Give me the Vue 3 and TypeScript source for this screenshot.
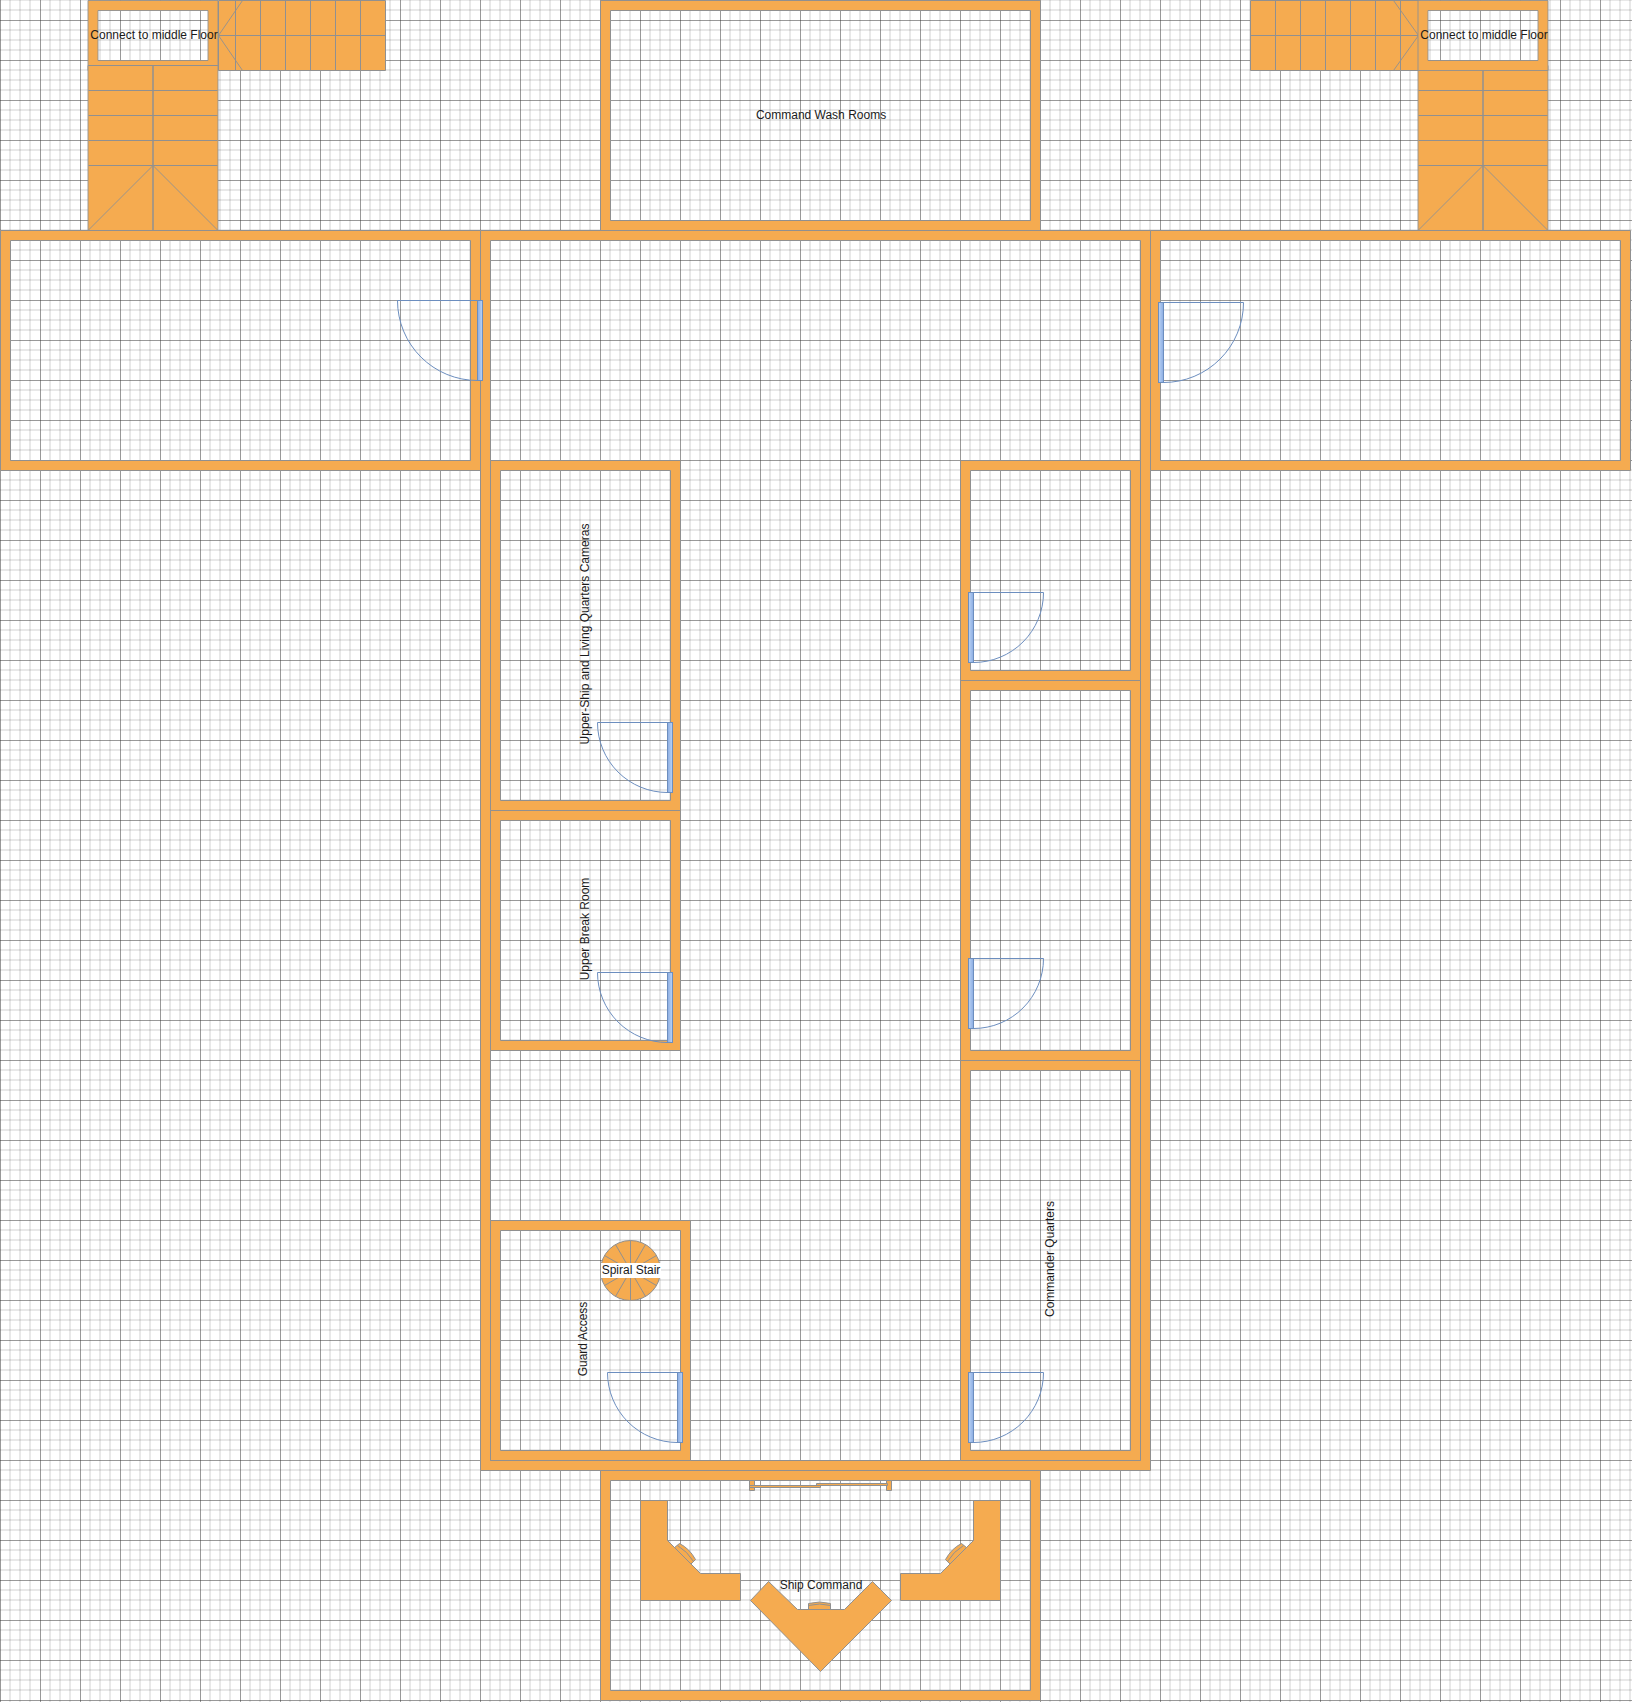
<script setup lang="ts">
interface Room { x: number; y: number; w: number; h: number }
interface Door { x: number; y: number; size: number; side: 'left' | 'right' }
interface Label { text: string; x: number; y: number; vertical?: boolean }

const WALL = 10

const rooms: Room[] = [
  { x: 600, y: 0, w: 440, h: 230 },
  { x: 0, y: 230, w: 480, h: 240 },
  { x: 1150, y: 230, w: 480, h: 240 },
  { x: 480, y: 230, w: 670, h: 1240 },
  { x: 490, y: 460, w: 190, h: 350 },
  { x: 490, y: 810, w: 190, h: 240 },
  { x: 490, y: 1220, w: 200, h: 240 },
  { x: 960, y: 460, w: 180, h: 220 },
  { x: 960, y: 680, w: 180, h: 380 },
  { x: 960, y: 1060, w: 180, h: 400 },
  { x: 600, y: 1470, w: 440, h: 230 },
]
const leftLanding: Room = { x: 88, y: 0, w: 130, h: 70 }
const rightLanding: Room = { x: 1418, y: 0, w: 130, h: 70 }

// x is the hinge line that the leaf swings from
const doors: Door[] = [
  { x: 477, y: 300, size: 80, side: 'left' },
  { x: 1163, y: 302, size: 80, side: 'right' },
  { x: 667, y: 722, size: 70, side: 'left' },
  { x: 667, y: 972, size: 70, side: 'left' },
  { x: 677, y: 1372, size: 70, side: 'left' },
  { x: 973, y: 592, size: 70, side: 'right' },
  { x: 973, y: 958, size: 70, side: 'right' },
  { x: 973, y: 1372, size: 70, side: 'right' },
]
const LEAF = 5

const labels: Label[] = [
  { text: 'Connect to middle Floor', x: 154, y: 39 },
  { text: 'Connect to middle Floor', x: 1484, y: 39 },
  { text: 'Command Wash Rooms', x: 821, y: 119 },
  { text: 'Upper-Ship and Living Quarters Cameras', x: 589, y: 634, vertical: true },
  { text: 'Upper Break Room', x: 589, y: 929, vertical: true },
  { text: 'Guard Access', x: 587, y: 1339, vertical: true },
  { text: 'Commander Quarters', x: 1054, y: 1259, vertical: true },
  { text: 'Ship Command', x: 821, y: 1589 },
]

const frame = ({ x, y, w, h }: Room): string =>
  `M${x} ${y}h${w}v${h}h${-w}z` +
  `M${x + WALL} ${y + WALL}h${w - 2 * WALL}v${h - 2 * WALL}h${2 * WALL - w}z`

const swing = (d: Door): string => {
  const dir = d.side === 'left' ? -1 : 1
  const tip = d.x + dir * d.size
  return `M${d.x} ${d.y}H${tip}A${d.size} ${d.size} 0 0 ${dir === 1 ? 1 : 0} ${d.x} ${d.y + d.size}`
}

const spokes: string = Array.from({ length: 12 }, (_, i) => {
  const a = (i * Math.PI) / 6
  return `M630 1270L${(630 + 30 * Math.sin(a)).toFixed(1)} ${(1270 - 30 * Math.cos(a)).toFixed(1)}`
}).join('')

const treads = [90, 115, 140, 165]
const stairs = [
  { x: 88, top: 65 },
  { x: 1418, top: 65 },
]
</script>

<template>
  <main class="plan">
    <svg class="sheet" viewBox="0 0 1632 1702" role="img" aria-label="Upper deck floor plan">
      <defs>
        <pattern id="grid" width="40" height="40" patternUnits="userSpaceOnUse" y="20">
          <path class="minor" d="M0 10H40M0 20H40M0 30H40" />
          <path class="minor" d="M10 0V40M20 0V40M30 0V40" />
          <path class="major" d="M0 .5H40" />
          <path class="major" d="M.5 0V40" />
        </pattern>
        <linearGradient id="leaf-left">
          <stop offset="0" stop-color="#8aace2" />
          <stop offset="1" stop-color="#bcd4f6" />
        </linearGradient>
        <linearGradient id="leaf-right">
          <stop offset="0" stop-color="#bcd4f6" />
          <stop offset="1" stop-color="#8aace2" />
        </linearGradient>
      </defs>
      <rect width="1632" height="1702" fill="url(#grid)" />

      <g class="solid" transform="translate(.5 .5)">
        <path class="soft" :d="frame(leftLanding)" transform="translate(-.5 0)" />

        <g v-for="s in stairs" :key="s.x">
          <path class="soft" :d="`M${s.x} ${s.top}h130V230h-130z`" transform="translate(-.5 0)" />
          <path :d="`M${s.x} ${s.top}h129` + treads.map((t) => `M${s.x} ${t}h129`).join('')" />
          <path class="soft open" :d="`M${s.x} 230l65 -65l65 65`" transform="translate(-.5 0)" />
          <path class="rail" :d="`M${s.x + 65} ${s.top}V230`" transform="translate(-.5 0)" />
        </g>

        <path d="M218 0H385V70H218zM218 35H385M235 0V70M260 0V70M285 0V70M310 0V70M335 0V70M360 0V70" />
        <path class="soft open" d="M242 0L218 35L242 70" />
        <path d="M1250 0H1418V70H1250zM1250 35H1418M1275 0V70M1300 0V70M1325 0V70M1350 0V70M1375 0V70M1400 0V70" />
        <path class="soft open" d="M1393 0L1418 35L1393 70" />
        <path class="soft" :d="frame(rightLanding)" transform="translate(-.5 0)" />

        <path v-for="r in rooms" :key="`${r.x}-${r.y}`" :d="frame(r)" />

        <circle cx="630" cy="1270" r="30" />
        <path :d="spokes" />

        <path d="M749 1480h5v10h-5zM886 1480h5v10h-5z" />
        <path d="M749 1485h71v2h-71zM816 1483h71v2h-71z" />

        <path d="M674 1547L679 1543Q689 1548 695 1559L690 1564z" />
        <path class="open" d="M677 1545Q687 1551 693 1561" />
        <path d="M966 1547L961 1543Q951 1548 945 1559L950 1564z" />
        <path class="open" d="M963 1545Q953 1551 947 1561" />
        <path d="M808 1610V1603Q819 1600 830 1603V1610z" />
        <path class="open" d="M808 1605Q819 1602 830 1605" />

        <path d="M640 1500H667V1540L700 1573H740V1600H640z" />
        <path d="M1000 1500H973V1540L940 1573H900V1600H1000z" />
        <path d="M750 1600L768 1581L797 1609H844L872 1581L891 1600L820 1671z" />
      </g>

      <g class="door" transform="translate(.5 .5)">
        <g v-for="d in doors" :key="`${d.x}-${d.y}`">
          <path :d="swing(d)" />
          <rect
            :class="`leaf-${d.side}`"
            :x="d.side === 'left' ? d.x : d.x - LEAF"
            :y="d.y"
            :width="LEAF"
            :height="d.size"
          />
        </g>
      </g>

      <g class="labels">
        <text
          v-for="(l, i) in labels"
          :key="i"
          :transform="`translate(${l.x} ${l.y})` + (l.vertical ? ' rotate(-90)' : '')"
        >{{ l.text }}</text>
        <rect x="601" y="1263" width="60" height="15" />
        <text x="631" y="1274">Spiral Stair</text>
      </g>
    </svg>
  </main>
</template>

<style>
body {
  margin: 0;
  background: #fff;
}
</style>

<style scoped>
.plan {
  width: 100%;
}
.sheet {
  display: block;
  width: 100%;
  height: auto;
}
.minor {
  fill: none;
  stroke: #000;
  stroke-opacity: 0.09;
  stroke-width: 2;
}
.major {
  fill: none;
  stroke: #333;
  stroke-opacity: 0.5;
}
.solid {
  fill: #f5ab50;
  fill-rule: evenodd;
  stroke: #909090;
  stroke-width: 1;
}
.soft {
  stroke-opacity: 0.9;
}
.rail {
  stroke-width: 2;
  stroke-opacity: 0.75;
}
.open {
  fill: none;
}
.door {
  fill: none;
  stroke: #6c8ebf;
}
.leaf-left {
  fill: url(#leaf-left);
}
.leaf-right {
  fill: url(#leaf-right);
}
.labels {
  font-family: "Liberation Sans", Arial, sans-serif;
  font-size: 12px;
  text-anchor: middle;
  fill: #1a1a1a;
}
.labels rect {
  fill: #fff;
}
</style>
